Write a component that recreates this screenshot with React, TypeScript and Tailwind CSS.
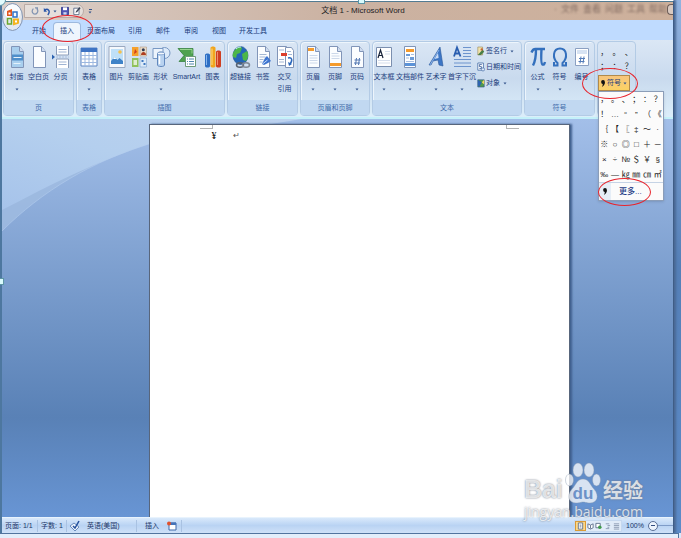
import { useState } from 'react';
import type { ReactNode } from 'react';

const TABS = ['开始', '插入', '页面布局', '引用', '邮件', '审阅', '视图', '开发工具'];

const QUICK_SYMBOLS = ['，', '。', '、', '；', '：', '？'];

const SYMBOLS = [
  '，', '。', '、', '；', '：', '？',
  '！', '…', '“', '”', '（', '《',
  '｛', '【', '〖', '‡', '～', '·',
  '※', '○', '◎', '□', '＋', '－',
  '×', '÷', '№', '＄', '￥', '§',
  '‰', '—', '㎏', '㎜', '㎝', '㎡',
];

function Sheet({ children }: { children?: ReactNode }) {
  return (
    <svg viewBox="0 0 20 24" className="w-5 h-6" fill="none">
      <path d="M4.5 1.500h8l4 5v16h-12z" fill="#fbfdff" stroke="#8195b8" />
      <path d="M12.5 1.500v5h4" fill="#cfdcf0" stroke="#8195b8" />
      {children}
    </svg>
  );
}

function CoverIcon() {
  return (
    <Sheet>
      <path d="M5 2h7v5h4v15H5z" fill="#a9cfee" />
      <path d="M5 9.500h11v6H5z" fill="#4f8fca" />
      <path d="M6.500 12.500h8M6.500 18.500h7" stroke="#e4f1fb" />
    </Sheet>
  );
}

function BreakIcon() {
  return (
    <svg viewBox="0 0 20 24" className="w-5 h-6" fill="none">
      <path d="M5.500 1v9h12V1M5.500 23v-9h12v9" fill="#fff" stroke="#8a9cba" />
      <path d="M7.500 4.500h8M7.500 7h8M7.500 17h8M7.500 19.500h8" stroke="#9eb3d3" />
      <path d="M5 12h13" stroke="#a8bedf" strokeDasharray="2 1" />
      <path d="M1 9.500 4 12 1 14.500z" fill="#2c62b0" />
    </svg>
  );
}

function TableIcon() {
  return (
    <svg viewBox="0 0 20 24" className="w-5 h-6">
      <path d="M2 3h16v18H2z" fill="#fff" stroke="#5f86c4" />
      <path d="M2 3h16v4H2z" fill="#3f74c4" />
      <path d="M2 10.500h16M2 14h16M2 17.500h16M6 7v14M10 7v14M14 7v14" stroke="#9db8e0" />
    </svg>
  );
}

function PictureIcon() {
  return (
    <svg viewBox="0 0 20 24" className="w-5 h-6">
      <path d="M2 1.500h16v21H2z" fill="#f6f9fd" stroke="#9aa9c0" />
      <path d="M4 4h12v15H4z" fill="#bfe0f8" />
      <circle cx="13" cy="7" r="1.800" fill="#f6c04c" />
      <path d="m4 16 3.500-4 3 3 2-2L16 16v3H4z" fill="#3f83c8" />
      <path d="m6 14 1.500-2 2 2z" fill="#fff" />
    </svg>
  );
}

function ClipArtIcon() {
  return (
    <svg viewBox="0 0 20 24" className="w-5 h-6">
      <path d="M3 2h6.500v9H3z" fill="#f5a12d" />
      <path d="M11 2h6.500v9H11z" fill="#e9dcc9" stroke="#a98a70" strokeWidth=".5" />
      <path d="M3 13h6.500v9H3z" fill="#8fc15b" />
      <path d="M11 13h6.500v9H11z" fill="#dceaf8" stroke="#6a94c8" strokeWidth=".5" />
      <path d="m6 4 2 3-3 2z" fill="#d23b1d" />
      <circle cx="14.300" cy="4.800" r="1.500" fill="#2f3b55" />
      <path d="M12 10c0-4 5-4 5 0z" fill="#ae3d20" />
      <path d="M4.500 15h3.500v5H4.500z" fill="#fff" opacity=".7" />
      <path d="M12.500 15h2v2h-2zm2 3h2v2h-2z" fill="#3f78c0" />
    </svg>
  );
}

function ShapesIcon() {
  return (
    <svg viewBox="0 0 20 24" className="w-5 h-6" fill="none">
      <circle cx="13.500" cy="8" r="5.500" fill="#dceafa" stroke="#7898c4" />
      <path d="M2 3.500h10v10H2z" fill="#edf4fc" stroke="#7898c4" />
      <path d="M6.500 8.500c0-2 7-2 7 0V20c0 2-7 2-7 0z" fill="#b8d2f0" stroke="#6288bd" />
      <ellipse cx="10" cy="8.500" rx="3.500" ry="1.300" fill="#f3f8fe" stroke="#6288bd" strokeWidth=".6" />
      <path d="M8.500 11v8" stroke="#fff" strokeWidth="1.500" />
    </svg>
  );
}

function SmartArtIcon() {
  return (
    <svg viewBox="0 0 20 24" className="w-5 h-6">
      <path d="M1 3.500h15v7l-4 6H2l5-6z" fill="#4fa150" stroke="#2d7a37" strokeWidth=".7" />
      <path d="M3 4.500h12v4" stroke="#98d38f" fill="none" />
      <path d="M8.500 11.500h10v10h-10z" fill="#fff" stroke="#6d9a79" />
      <path d="M10 14h1m1 0h5M10 16.500h1m1 0h5M10 19h1m1 0h5" stroke="#4f86ad" />
    </svg>
  );
}

function ChartIcon() {
  return (
    <svg viewBox="0 0 20 24" className="w-5 h-6">
      <path d="M2 10c0-2 5-2 5 0v11c0 2-5 2-5 0z" fill="#2f6fc4" />
      <path d="M7.500 3c0-2 5-2 5 0v18c0 2-5 2-5 0z" fill="#f1a51d" />
      <path d="M13 7c0-2 5-2 5 0v14c0 2-5 2-5 0z" fill="#cf3f22" />
      <path d="M3.500 10v10" stroke="#88b6ee" />
      <path d="M9 3.500V20" stroke="#fbdc85" />
      <path d="M14.500 7v13" stroke="#ef8a6b" />
    </svg>
  );
}

function LinkIcon() {
  return (
    <svg viewBox="0 0 20 24" className="w-5 h-6" fill="none">
      <ellipse cx="9.500" cy="10.500" rx="7.500" ry="9" fill="#2467b8" stroke="#1d4d8b" strokeWidth=".6" />
      <path d="M4 5c3-4 6-3 7-2l-2 5-3 1-1 4-3-1c-1-2 0-5 2-7zM11 9l5-3c2 3 1 8-1 10l-3-1z" fill="#4cb648" />
      <path d="M5 4c2-2 4-2 5-2" stroke="#c2ecf5" />
      <ellipse cx="9" cy="20" rx="3.500" ry="2.300" stroke="#56606e" strokeWidth="1.500" />
      <ellipse cx="15" cy="20" rx="3.500" ry="2.300" stroke="#7d8795" strokeWidth="1.500" />
    </svg>
  );
}

function BookmarkIcon() {
  return (
    <Sheet>
      <path d="M6.500 9.500h7M6.500 12h6M6.500 14.500h4M6.500 17h3" stroke="#a3b7d4" />
      <path d="m9 19 3-6 2-2 4 5-3 2-4 2z" fill="#3d74cf" />
      <path d="m9.500 19 5-4" stroke="#c8dcfa" />
    </Sheet>
  );
}

function CrossRefIcon() {
  return (
    <svg viewBox="0 0 20 24" className="w-5 h-6" fill="none">
      <path d="M2.500 1.500h9v19h-9z" fill="#fff" stroke="#8195b8" />
      <path d="M10.500 2.500h6l2 3v17h-8z" fill="#fff" stroke="#8195b8" />
      <path d="M6 8h6v3H6z" fill="#dc3f2c" />
      <path d="M4 5h5M4 14.500h5M4 17h5M12 6.500h4M13 9.500h4" stroke="#a3b7d4" />
      <path d="M13 13c4-1 5 2 2 6" stroke="#2b68bc" strokeWidth="1.500" />
      <path d="m13 17 1 4 3-2z" fill="#2b68bc" />
    </svg>
  );
}

function HeaderIcon() {
  return (
    <Sheet>
      <path d="M5 3h6v3H5z" fill="#f59b2c" />
      <path d="M6.500 10.500h8M6.500 13h8M6.500 15.500h8M6.500 18h8" stroke="#ccd8ea" />
    </Sheet>
  );
}

function FooterIcon() {
  return (
    <Sheet>
      <path d="M5 18h11v3H5z" fill="#f59b2c" />
      <path d="M6.500 8.500h7M6.500 11h8M6.500 13.500h8" stroke="#ccd8ea" />
    </Sheet>
  );
}

function PageNumberIcon() {
  return (
    <Sheet>
      <path d="M7.500 15h6m-6.500 3h6m-3.500-5-1 7m4-7-1 7" stroke="#5277b2" />
    </Sheet>
  );
}

function TextBoxIcon() {
  return (
    <svg viewBox="0 0 20 24" className="w-5 h-6" fill="none">
      <path d="M2.500 2.500h15v19h-15z" fill="#fff" stroke="#7b8faf" />
      <path d="M11 6.500h5M11 9h5M4 15.500h12M4 18h12" stroke="#d5deec" />
      <path d="m4 13 2.500-8L9 13M5 10.500h3" stroke="#19243a" strokeWidth="1.200" />
    </svg>
  );
}

function PartsIcon() {
  return (
    <svg viewBox="0 0 20 24" className="w-5 h-6" fill="none">
      <path d="M4.500 1.500h11v21h-11z" fill="#fff" stroke="#7f94b7" />
      <path d="M6 4h8v3H6z" fill="#f59b2c" />
      <path d="M5 18h10v3H5z" fill="#5c93d8" />
      <path d="M6 9h4v2H6zm4 3h4v3h-4z" fill="#6b9bd8" />
      <path d="M11 9.500h3M6 13h3M6 16.500h8" stroke="#a9bfdf" />
    </svg>
  );
}

function WordArtIcon() {
  return (
    <svg viewBox="0 0 20 24" className="w-5 h-6" fill="none">
      <path d="M3 20 14 2l3 19-4-1-1-5-5 1-2 4z" fill="#3c76c6" stroke="#2a5798" strokeWidth=".6" />
      <path d="m8.500 14 3.500-6 .600 5z" fill="#cbdcf5" />
      <path d="m4 20 9-15" stroke="#9dc0ef" strokeWidth=".8" />
    </svg>
  );
}

function DropCapIcon() {
  return (
    <svg viewBox="0 0 20 24" className="w-5 h-6" fill="none">
      <path d="M11 2.500h8M11 5.500h8M11 8.500h8M11 11.500h8M2 14.500h17M2 18h17M2 21.500h17" stroke="#6d94cd" />
      <path d="m2 11.500 3-9 3.500 9M3.500 8.500h4" stroke="#2a5eaf" strokeWidth="1.800" />
    </svg>
  );
}

function PiIcon() {
  return (
    <svg viewBox="0 0 20 24" className="w-5 h-6" fill="none" stroke="#3470bd" strokeWidth="2.400">
      <path d="M3.500 7.500c1-3 2-3.500 4-3.500H17" />
      <path d="M8 4c0 7-.500 12-3 16.500" />
      <path d="M13.500 4c-.500 9-.500 15 1 15.500 1.500.400 2-.500 2.500-2.500" />
    </svg>
  );
}

function OmegaIcon() {
  return (
    <svg viewBox="0 0 20 24" className="w-5 h-6" fill="none" stroke="#3470bd" strokeWidth="2">
      <path d="M4 17v3.500h3.500V18C2 13 3 3.500 10 3.500S18 13 12.500 18v2.500H16V17" />
    </svg>
  );
}

function NumberIcon() {
  return (
    <svg viewBox="0 0 20 24" className="w-5 h-6" fill="none">
      <path d="M3.500 3.500h13v17h-13z" fill="#fff" stroke="#8ba0c2" />
      <path d="M5 5h10v4H5z" fill="#d7e3f3" />
      <path d="M7 13.500h6m-6.500 3h6m-3.500-5-1 7m4-7-1 7" stroke="#557db9" />
    </svg>
  );
}

type Item = { label: string; icon: ReactNode; width?: string; arrow?: boolean; second?: string };

const GROUPS: { name: string; className: string; items: Item[] }[] = [
  {
    name: '页',
    className: 'w-[71px]',
    items: [
      { label: '封面', icon: <CoverIcon />, arrow: true },
      { label: '空白页', icon: <Sheet /> },
      { label: '分页', icon: <BreakIcon /> },
    ],
  },
  { name: '表格', className: 'w-[26px]', items: [{ label: '表格', icon: <TableIcon />, arrow: true }] },
  {
    name: '插图',
    className: 'w-[121px]',
    items: [
      { label: '图片', icon: <PictureIcon /> },
      { label: '剪贴画', icon: <ClipArtIcon /> },
      { label: '形状', icon: <ShapesIcon />, arrow: true },
      { label: 'SmartArt', icon: <SmartArtIcon />, width: 'w-[30px]' },
      { label: '图表', icon: <ChartIcon /> },
    ],
  },
  {
    name: '链接',
    className: 'w-[71px]',
    items: [
      { label: '超链接', icon: <LinkIcon /> },
      { label: '书签', icon: <BookmarkIcon /> },
      { label: '交叉', icon: <CrossRefIcon />, second: '引用' },
    ],
  },
  {
    name: '页眉和页脚',
    className: 'w-[70px]',
    items: [
      { label: '页眉', icon: <HeaderIcon />, arrow: true },
      { label: '页脚', icon: <FooterIcon />, arrow: true },
      { label: '页码', icon: <PageNumberIcon />, arrow: true },
    ],
  },
  {
    name: '文本',
    className: 'w-[150px]',
    items: [
      { label: '文本框', icon: <TextBoxIcon />, arrow: true },
      { label: '文档部件', icon: <PartsIcon />, arrow: true, width: 'w-[30px]' },
      { label: '艺术字', icon: <WordArtIcon />, arrow: true },
      { label: '首字下沉', icon: <DropCapIcon />, arrow: true, width: 'w-[30px]' },
    ],
  },
  {
    name: '符号',
    className: 'w-[71px]',
    items: [
      { label: '公式', icon: <PiIcon />, arrow: true },
      { label: '符号', icon: <OmegaIcon />, arrow: true },
      { label: '编号', icon: <NumberIcon /> },
    ],
  },
];

function Caret() {
  return (
    <svg viewBox="0 0 4 3" className="w-1 h-[3px] shrink-0">
      <path d="M.5 .5h3L2 2.500z" fill="#35558c" />
    </svg>
  );
}

function SmallTextButtons() {
  return (
    <div className="flex flex-col gap-1 text-[7px] leading-3">
      <button className="flex items-center gap-px whitespace-nowrap">
        <svg viewBox="0 0 10 12" className="w-2 h-3 shrink-0">
          <path d="M1 1h6v10H1z" fill="#f2e3ab" stroke="#90804f" strokeWidth=".7" />
          <path d="M1 11 7 4l2 3-4 4z" fill="#4a7e46" />
          <circle cx="6" cy="4" r="1.500" fill="#c06534" />
        </svg>
        签名行
        <span className="pl-0.5"><Caret /></span>
      </button>
      <button className="flex items-center gap-px whitespace-nowrap">
        <svg viewBox="0 0 10 12" className="w-2 h-3 shrink-0" fill="none">
          <path d="M1 1h7v9H1z" fill="#fff" stroke="#4269a4" />
          <path d="M6 3H3v2.500h2.500V8H3" stroke="#2b5293" />
          <circle cx="7.500" cy="9" r="2" fill="#dbe7f8" stroke="#4269a4" strokeWidth=".8" />
        </svg>
        日期和时间
      </button>
      <button className="flex items-center gap-px whitespace-nowrap">
        <svg viewBox="0 0 10 12" className="w-2 h-3 shrink-0">
          <path d="M1 2h8v9H1z" fill="#4d9a4c" stroke="#33538b" strokeWidth=".8" />
          <path d="m1 2 5 3-3 6-2-2z" fill="#2d63b0" />
          <path d="m6 5 3-3v6z" fill="#f2d35b" />
        </svg>
        对象
        <span className="pl-0.5"><Caret /></span>
      </button>
    </div>
  );
}

function RibbonButton({ item }: { item: Item }) {
  return (
    <button className={`flex shrink-0 flex-col items-center whitespace-nowrap text-[7px] ${item.width || 'w-[22px]'}`}>
      {item.icon}
      <span className="mt-0.5 leading-3">{item.label}</span>
      {item.second && <span className="leading-3">{item.second}</span>}
      {item.arrow && <span className="flex h-3 items-center"><Caret /></span>}
    </button>
  );
}

function TitleBar() {
  return (
    <header className="relative flex h-[19px] items-center border-t border-[#527b92] bg-linear-to-r from-[#dbcfc9] via-[#cbb2a2] to-[#cdb09b]">
      <button aria-label="Office 按钮" className="absolute left-0 top-0 z-10">
        <svg viewBox="0 0 22 30" className="h-[30px] w-[22px]">
          <ellipse cx="10.500" cy="15" rx="10" ry="13.500" fill="#e4e9f0" stroke="#8295b3" />
          <ellipse cx="10.500" cy="10" rx="8" ry="7.500" fill="#f9fbfd" />
          <path d="m5 9 5-2v7H5z" fill="#e2571e" />
          <path d="M6.500 10.500h2v2h-2z" fill="#fff" />
          <path d="M11 10h4v5h-4z" fill="none" stroke="#2f72c8" strokeWidth="1.500" />
          <path d="M5.500 16.500h4V22h-4z" fill="none" stroke="#6aa82e" strokeWidth="1.500" />
          <path d="M11 16.500h6v5l-6 2z" fill="#f5b41e" />
          <path d="M13 18.500h2v2h-2z" fill="#fff" />
        </svg>
      </button>
      <div className="ml-[22px] flex h-[14px] w-[60px] items-center gap-1 rounded-r-full border border-[#b9aaa5] bg-[#e5deda] pl-1.5">
        <button aria-label="恢复">
          <svg viewBox="0 0 10 12" className="h-3 w-2" fill="none" stroke="#7f92b1" strokeWidth="1.500">
            <path d="M3 3c-3 3-1 7 2 7s5-5 2-7M5 2h3v3" />
          </svg>
        </button>
        <button aria-label="撤消" className="flex items-center gap-0.5">
          <svg viewBox="0 0 10 12" className="h-3 w-2" fill="none" stroke="#2a56a8" strokeWidth="1.800">
            <path d="M2 5c4-3 8 1 4 6" />
            <path d="M1 2v5h4z" fill="#2a56a8" stroke="none" />
          </svg>
          <Caret />
        </button>
        <button aria-label="保存">
          <svg viewBox="0 0 10 12" className="h-3 w-2">
            <path d="M.500 1.500h9v9h-9z" fill="#4e55b5" stroke="#2d3587" />
            <path d="M2.500 1.500h5V5h-5z" fill="#fff" />
            <path d="M3 7.500h4v3H3z" fill="#cfd6f2" />
          </svg>
        </button>
        <button aria-label="编辑">
          <svg viewBox="0 0 10 12" className="h-3 w-2">
            <path d="M1 2.500h6.500v8H1z" fill="#fff" stroke="#4d5e7d" />
            <path d="m3 8 1-2 4-5 1.500 1.500L5 7.500z" fill="#3e4657" />
          </svg>
        </button>
      </div>
      <button aria-label="自定义快速访问工具栏" className="ml-1 flex flex-col items-center gap-px">
        <span className="h-px w-[3px] bg-[#35558c]" />
        <Caret />
      </button>
      <h1 className="flex-1 whitespace-nowrap pl-20 text-center text-[8px] leading-4 text-[#1d1d24]">文档 1 - Microsoft Word</h1>
      <div className="flex w-[119px] items-start gap-1 self-start pt-px text-[9px] leading-3 text-[#806a60] blur-[1px]" aria-hidden="true">
        <span>·</span><span>文件</span><span>查看</span><span>问题</span><span>工具</span><span>帮助</span>
      </div>
      <span className="absolute right-0 top-0.5 h-[11px] w-1.5 rounded-l-sm border border-r-0 border-[#6d5d58] bg-[#d8c9c0]" />
    </header>
  );
}

function SymbolPanel() {
  return (
    <div className="absolute left-0 top-full z-20 w-[66px] border border-[#8b9db8] bg-[#fbfbfb] text-[#222] shadow-sm">
      <div className="grid grid-cols-6">
        {SYMBOLS.map((s, i) => (
          <button key={i} className="h-[15px] overflow-hidden text-center text-[8px] leading-[15px]">{s}</button>
        ))}
      </div>
      <button className="flex h-[18px] w-full items-center border-t border-[#c5d3e5]">
        <span className="flex h-full w-3 items-center justify-center bg-[#e6eef7]"><Comma /></span>
        <span className="pl-2 text-[8px] font-medium text-[#1e3c86]">更多...</span>
      </button>
    </div>
  );
}

function Comma() {
  return (
    <svg viewBox="0 0 4 7" className="h-[7px] w-1">
      <circle cx="2" cy="2" r="1.900" fill="#111" />
      <path d="M3.900 2c0 2-1 4-3 5 1-2 1-3 .600-4z" fill="#111" />
    </svg>
  );
}

function Ribbon() {
  const [open, setOpen] = useState(true);

  return (
    <div className="flex h-[79px] gap-0.5 border-b-2 border-[#c4f1f9] bg-linear-to-b from-[#dbe7f5] via-[#c9daee] to-[#dceefa] px-px py-px text-[#1c3d7c]">
      {GROUPS.map(group => (
        <section key={group.name} className={`flex shrink-0 flex-col rounded-sm border border-[#b3cbe5] shadow-[inset_1px_1px_0_#edf5fc] ${group.className}`}>
          <div className="flex flex-1 justify-center pt-[3px]">
            {group.items.map(item => <RibbonButton key={item.label} item={item} />)}
            {group.name === '文本' && <SmallTextButtons />}
          </div>
          <div className="h-[15px] bg-[#c1d8f1] text-center text-[7px] leading-[15px] text-[#3e6aaa]">{group.name}</div>
        </section>
      ))}

      {/* symbol toolbar */}
      <section className="w-[39px] shrink-0 rounded-sm border border-[#b3cbe5] pt-1">
        <div className="grid grid-cols-3 text-[#222]">
          {QUICK_SYMBOLS.map(s => (
            <button key={s} className="h-[14px] text-center text-[8px] leading-[14px]">{s}</button>
          ))}
        </div>
        <div className="relative mt-px">
          <button
            onClick={() => setOpen(!open)}
            className="flex h-4 w-8 items-center justify-center gap-0.5 whitespace-nowrap border border-[#b08a4c] bg-linear-to-b from-[#f7c47c] to-[#fbd264] text-[7px] text-[#1c3d7c]"
          >
            <Comma />
            <span>符号</span>
            <Caret />
          </button>
          {open && <SymbolPanel />}
        </div>
      </section>
    </div>
  );
}

function Workspace() {
  return (
    <main className="relative flex flex-1 justify-center overflow-hidden bg-linear-to-b from-[#a3bfe9] via-[#5981b6] via-75% to-[#6895d4] pt-[5px]">
      <svg viewBox="0 0 300 120" className="absolute left-0 top-0 h-[120px] w-[300px]">
        <defs>
          <linearGradient id="glow" x1="0" y1="1" x2="1" y2="0">
            <stop offset="0" stopColor="#a6c3ea" />
            <stop offset=".5" stopColor="#b4cfee" />
            <stop offset="1" stopColor="#bdd2ef" />
          </linearGradient>
        </defs>
        <path d="M0 112C40 72 90 42 150 24L300 0H0z" fill="#a1bde2" opacity=".75" />
        <path d="M0 91C50 65 95 42 150 24L300 0H0z" fill="url(#glow)" />
        <path d="M0 112C40 72 90 42 150 24" fill="none" stroke="#b4cdef" opacity=".6" />
      </svg>
      <article className="relative mr-[-43px] w-[421px] shrink border border-b-0 border-[#58667c] bg-white text-black shadow-[2px_0_2px_#3f5f8d]">
        <div className="flex justify-between px-[50px]">
          <span className="h-1 w-[13px] border-r border-b border-[#b4b4b4]" />
          <span className="h-1 w-[13px] border-b border-l border-[#b4b4b4]" />
        </div>
        <p className="flex gap-4 pl-[62px] font-['Liberation_Serif','Noto_Sans_CJK_SC',serif] text-[10px] leading-[14px]">
          <span>¥</span>
          <span className="text-[8px] text-[#555]">↵</span>
        </p>
      </article>
    </main>
  );
}

function StatusBar() {
  return (
    <footer className="flex h-4 items-center border-t border-[#e8f3fd] bg-linear-to-b from-[#d9e9fb] via-[#b9d3f3] to-[#cfe1f8] text-[7px] leading-3 text-[#1b3668] whitespace-nowrap">
      <span className="w-9 border-r border-[#a9c2e2] pl-[3px]">页面: 1/1</span>
      <span className="w-[29px] border-r border-[#a9c2e2] pl-[3px]">字数: 1</span>
      <svg viewBox="0 0 12 12" className="ml-0.5 h-3 w-3" fill="none">
        <path d="m1 6 4-3 5 4-4 4z" fill="#eff5fd" stroke="#6b8cbd" />
        <path d="m4 6 2 2 4-7" stroke="#234f9b" strokeWidth="1.500" />
      </svg>
      <span className="w-14 border-r border-[#a9c2e2] pl-1.5">英语(美国)</span>
      <span className="pl-2">插入</span>
      <svg viewBox="0 0 10 10" className="ml-2 h-2.5 w-2.5">
        <path d="M2 2h7v7H2z" fill="#fff" stroke="#3f69a8" />
        <path d="M2 1.500h7V4H2z" fill="#4574b9" />
        <circle cx="2" cy="2.500" r="2" fill="#e0512d" />
      </svg>
      <span className="ml-1 h-3 border-l border-[#a9c2e2]" />
      <div className="ml-auto flex h-3 w-12 items-center border border-[#c5d8ef] bg-[#e0ebf8]">
        {['页面视图', '阅读版式视图', 'Web 版式视图', '大纲视图', '普通视图'].map((name, i) => (
          <button key={name} aria-label={name} className={`flex h-full flex-1 items-center justify-center ${i === 0 ? 'border border-[#d99a35] bg-[#fbd88a]' : ''}`}>
            <svg viewBox="0 0 8 8" className="h-2 w-[7px]" fill="none" stroke="#5a6c88">
              {i === 0 && <path d="M1.500.500h5v7h-5zM3 3h2M3 5h2" fill="#fff" />}
              {i === 1 && <path d="M1 1.500 4 3l3-1.500V6L4 7.500 1 6zM4 3v4" fill="#fff" />}
              {i === 2 && <><path d="M1 1h5v5H1z" fill="#fff" /><circle cx="5.500" cy="5.500" r="2" fill="#3f9a4a" stroke="none" /></>}
              {i === 3 && <path d="M2 1.500h4M4 3.500h3M4 5.500h2M2 7h4" stroke="#8797af" />}
              {i === 4 && <path d="M1 1.500h6M1 3.500h6M1 5.500h6M1 7.500h6" stroke="#8797af" />}
            </svg>
          </button>
        ))}
      </div>
      <span className="w-[26px] pl-1">100%</span>
      <button aria-label="缩小" className="flex h-2.5 w-2.5 items-center justify-center rounded-full border border-[#596f96] bg-[#edf4fd]">
        <span className="h-px w-1 bg-[#324e80]" />
      </button>
      <span className="h-px w-[15px] bg-[#7f9cc8]" />
    </footer>
  );
}

function Watermark() {
  return (
    <div className="pointer-events-none absolute right-[38px] bottom-[18px] z-30 flex flex-col text-white/75 [text-shadow:0_0_2px_#6f7886]">
      <div className="flex items-end justify-between">
        <span className="text-[25px] leading-[30px] font-bold">Bai</span>
        <svg viewBox="0 0 36 42" className="h-[42px] w-9">
          <g fill="#fff" fillOpacity=".75" stroke="#8595ad" strokeOpacity=".4">
            <ellipse cx="13" cy="8" rx="5" ry="7" />
            <ellipse cx="24" cy="8" rx="5" ry="7" />
            <ellipse cx="4.500" cy="18" rx="4" ry="6" />
            <ellipse cx="31.500" cy="18" rx="4" ry="6" />
            <path d="M18 17c6 0 7 6 11 10 6 7 3 14-4 14-4 0-5-1-7-1s-3 1-7 1c-7 0-10-7-4-14 4-4 5-10 11-10z" />
          </g>
          <text x="18" y="37" textAnchor="middle" fontSize="17" fontWeight="700" fill="#6c91c7" className="[text-shadow:none]">du</text>
        </svg>
        <span className="text-[20px] leading-7 font-bold font-['Noto_Sans_CJK_SC',sans-serif]">经验</span>
      </div>
      <span className="font-['Open_Sans',sans-serif] text-[14px] leading-4">jingyan.baidu.com</span>
    </div>
  );
}

export default function App() {
  const [tab, setTab] = useState('插入');

  return (
    <div className="relative flex min-h-screen flex-col bg-[#d9e7fa] font-['Liberation_Sans','Noto_Sans_CJK_SC',sans-serif]">
      <div className="flex flex-1 bg-linear-to-b from-[#92b3df] via-[#5580b8] to-[#5c8bc8]">
        <div className="flex min-w-0 flex-1 flex-col border-t border-l-2 border-t-white border-l-[#4d779f] border-r border-r-[#3f5d86] shadow-[2px_0_2px_#4a6894]">
          <TitleBar />
          <nav className="flex h-5 items-end bg-[#bfdbff] pl-[23px] text-[7px] text-[#1c3d7c]">
            {TABS.map(name => (
              <button
                key={name}
                onClick={() => setTab(name)}
                className={`h-[18px] whitespace-nowrap ${name.length > 2 ? 'w-10' : 'w-7'} ${
                  tab === name ? 'rounded-t-sm border border-b-0 border-[#9db9de] bg-[#eef5fd]' : ''
                }`}
              >
                {name}
              </button>
            ))}
          </nav>
          <Ribbon />
          <Workspace />
          <StatusBar />
        </div>
        <div className="w-[7px]" />
      </div>
      <div className="mr-0.5 h-[5px] border-t border-r border-[#52749f] bg-[#e3eefb]" />

      {/* selection handles */}
      <span className="absolute -top-1.5 -left-1.5 z-20 h-3 w-3 rounded-full border border-[#5b95a5] bg-[#e3fbfd]" />
      <span className="absolute left-[358px] -top-0.5 h-1.5 w-[7px] border border-[#5b95a5] bg-[#d9fafd]" />
      <span className="absolute -left-1 top-[278px] h-[7px] w-2 border border-[#5b95a5] bg-[#d9fafd]" />

      {/* red marks */}
      <span className="pointer-events-none absolute left-[42px] top-[15px] z-30 h-[27px] w-[51px] rounded-[50%] border border-[#e8242c]" />
      <span className="pointer-events-none absolute left-[582px] top-[68px] z-30 h-[31px] w-[56px] rounded-[50%] border border-[#e8242c]" />
      <span className="pointer-events-none absolute left-[598px] top-[178px] z-30 h-[28px] w-[53px] rounded-[50%] border border-[#e8242c]" />

      <Watermark />
    </div>
  );
}
